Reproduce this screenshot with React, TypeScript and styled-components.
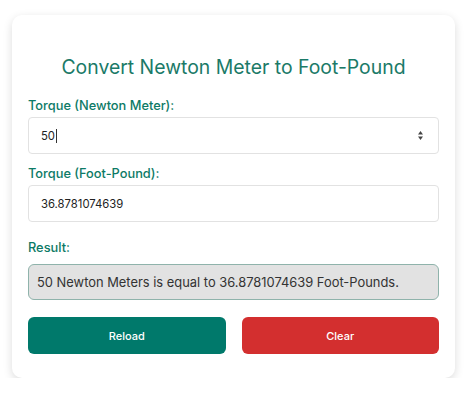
import React, { useState } from "react"
import styled, { createGlobalStyle } from "styled-components"

const GlobalStyle = createGlobalStyle`
  body {
    margin: 0;
    background: #ffffff;
    font-family: Inter, "Noto Sans", sans-serif;
  }
`

const Page = styled.div`
  padding: 15px 19px 0 12px;
`

const Card = styled.div`
  background: #ffffff;
  border-radius: 10px;
  box-shadow: 0 3px 10px rgba(0, 0, 0, 0.14);
  padding: 36px 16px 24px;
  display: flex;
  flex-direction: column;
`

const Title = styled.h2`
  margin: 0 0 13px;
  text-align: center;
  font-size: 19.4px;
  font-weight: 400;
  line-height: 32px;
  color: #1b7a68;
`

const Label = styled.label<{ $gapTop?: number; $gapBottom?: number }>`
  display: block;
  font-size: 12.8px;
  font-weight: 500;
  line-height: 20px;
  color: #0d7a66;
  margin-top: ${(p) => p.$gapTop ?? 0}px;
  margin-bottom: ${(p) => p.$gapBottom ?? 1}px;
`

const Field = styled.div`
  height: 37px;
  box-sizing: border-box;
  border: 1px solid #e2e2e2;
  border-radius: 4px;
  display: flex;
  align-items: center;
  justify-content: space-between;
  padding: 0 14px 0 12px;
  font-size: 11.3px;
  color: #222;
`

const Caret = styled.span`
  display: inline-block;
  width: 1px;
  height: 14px;
  background: #333;
  margin-left: 1px;
  vertical-align: -3px;
`

const Spinner = styled.svg`
  width: 7px;
  height: 11px;
`

const ResultBox = styled.div`
  height: 36px;
  box-sizing: border-box;
  background: #e2e2e2;
  border: 1px solid #8fb3ab;
  border-radius: 6px;
  display: flex;
  align-items: center;
  padding: 0 8px;
  font-size: 12.9px;
  color: #333;
  white-space: nowrap;
`

const Buttons = styled.div`
  display: grid;
  grid-template-columns: 1fr 1fr;
  gap: 16px;
  margin-top: 17px;
`

const Button = styled.button<{ $danger?: boolean }>`
  height: 37px;
  border: none;
  border-radius: 6px;
  background: ${(p) => (p.$danger ? "#d32f2f" : "#00796b")};
  color: #fff;
  font-family: Inter, "Noto Sans", sans-serif;
  font-size: 11px;
  font-weight: 500;
  cursor: pointer;
`

export default function App() {
  const [nm] = useState("50")
  const ft = "36.8781074639"
  return (
    <Page>
      <GlobalStyle />
      <Card>
        <Title>Convert Newton Meter to Foot-Pound</Title>
        <Label>Torque (Newton Meter):</Label>
        <Field>
          <span>
            {nm}
            <Caret />
          </span>
          <Spinner viewBox="0 0 7 11">
            <path d="M3.5 1 L6 4.5 H1 Z" fill="#444" />
            <path d="M3.5 10 L6 6.5 H1 Z" fill="#444" />
          </Spinner>
        </Field>
        <Label $gapTop={10}>Torque (Foot-Pound):</Label>
        <Field>
          <span>{ft}</span>
        </Field>
        <Label $gapTop={16} $gapBottom={6}>
          Result:
        </Label>
        <ResultBox>
          {nm} Newton Meters is equal to {ft} Foot-Pounds.
        </ResultBox>
        <Buttons>
          <Button>Reload</Button>
          <Button $danger>Clear</Button>
        </Buttons>
      </Card>
    </Page>
  )
}
